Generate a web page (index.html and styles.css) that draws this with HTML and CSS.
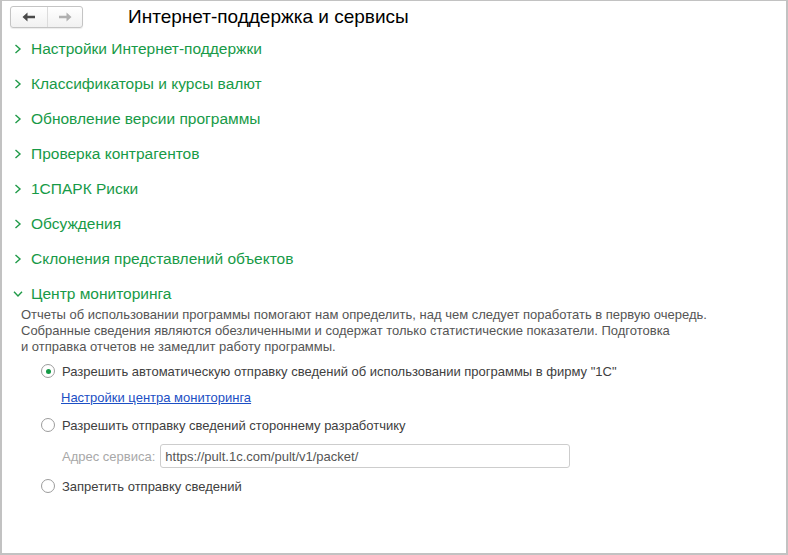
FILE: index.html
```html
<!DOCTYPE html>
<html lang="ru">
<head>
<meta charset="utf-8">
<link rel="stylesheet" href="styles.css">
</head>
<body>
<div class="frame">
  <div class="header">
    <div class="nav">
      <button class="navbtn back" type="button">
        <svg width="14" height="10" viewBox="0 0 14 10"><path d="M0.5 5 L5.5 0.5 L5.5 3.8 L13 3.8 L13 6.2 L5.5 6.2 L5.5 9.5 Z" fill="#4a4a4a"/></svg>
      </button>
      <button class="navbtn fwd" type="button">
        <svg width="14" height="10" viewBox="0 0 14 10"><path d="M13.5 5 L8.5 0.5 L8.5 3.8 L1 3.8 L1 6.2 L8.5 6.2 L8.5 9.5 Z" fill="#b0b0b0"/></svg>
      </button>
    </div>
    <h1 class="title">Интернет-поддержка и сервисы</h1>
  </div>

  <ul class="groups">
    <li class="group"><span class="chev"><svg width="8" height="10" viewBox="0 0 8 10"><path d="M1.5 1 L6 5 L1.5 9" fill="none" stroke="#1f9a48" stroke-width="1.4"/></svg></span>Настройки Интернет-поддержки</li>
    <li class="group"><span class="chev"><svg width="8" height="10" viewBox="0 0 8 10"><path d="M1.5 1 L6 5 L1.5 9" fill="none" stroke="#1f9a48" stroke-width="1.4"/></svg></span>Классификаторы и курсы валют</li>
    <li class="group"><span class="chev"><svg width="8" height="10" viewBox="0 0 8 10"><path d="M1.5 1 L6 5 L1.5 9" fill="none" stroke="#1f9a48" stroke-width="1.4"/></svg></span>Обновление версии программы</li>
    <li class="group"><span class="chev"><svg width="8" height="10" viewBox="0 0 8 10"><path d="M1.5 1 L6 5 L1.5 9" fill="none" stroke="#1f9a48" stroke-width="1.4"/></svg></span>Проверка контрагентов</li>
    <li class="group"><span class="chev"><svg width="8" height="10" viewBox="0 0 8 10"><path d="M1.5 1 L6 5 L1.5 9" fill="none" stroke="#1f9a48" stroke-width="1.4"/></svg></span>1СПАРК Риски</li>
    <li class="group"><span class="chev"><svg width="8" height="10" viewBox="0 0 8 10"><path d="M1.5 1 L6 5 L1.5 9" fill="none" stroke="#1f9a48" stroke-width="1.4"/></svg></span>Обсуждения</li>
    <li class="group"><span class="chev"><svg width="8" height="10" viewBox="0 0 8 10"><path d="M1.5 1 L6 5 L1.5 9" fill="none" stroke="#1f9a48" stroke-width="1.4"/></svg></span>Склонения представлений объектов</li>
    <li class="group open"><span class="chev"><svg width="10" height="8" viewBox="0 0 10 8"><path d="M1 1.8 L5 6 L9 1.8" fill="none" stroke="#1f9a48" stroke-width="1.4"/></svg></span>Центр мониторинга</li>
  </ul>

  <div class="monitor">
    <p class="desc">Отчеты об использовании программы помогают нам определить, над чем следует поработать в первую очередь.<br>Собранные сведения являются обезличенными и содержат только статистические показатели. Подготовка<br>и отправка отчетов не замедлит работу программы.</p>

    <div class="options">
      <div class="radio-row"><span class="radio checked"></span>Разрешить автоматическую отправку сведений об использовании программы в фирму "1С"</div>
      <a class="link" href="#">Настройки центра мониторинга</a>
      <div class="radio-row"><span class="radio"></span>Разрешить отправку сведений стороннему разработчику</div>
      <div class="field-row">
        <span class="field-label">Адрес сервиса:</span>
        <span class="field-input">https://pult.1c.com/pult/v1/packet/</span>
      </div>
      <div class="radio-row last"><span class="radio"></span>Запретить отправку сведений</div>
    </div>
  </div>
</div>
</body>
</html>
```

FILE: styles.css
```css
html, body {
  margin: 0;
  padding: 0;
  background: #ffffff;
}
body {
  font-family: "Liberation Sans", Arial, sans-serif;
  width: 788px;
  height: 555px;
  overflow: hidden;
}
.frame {
  box-sizing: border-box;
  width: 788px;
  height: 555px;
  border: 2px solid #c2c2c2;
  border-top-width: 1px;
  background: #fff;
}
.header {
  display: flex;
  align-items: center;
  padding: 4px 0 0 8px;
  height: 23px;
}
.nav {
  display: flex;
  width: 73px;
  height: 22px;
  box-sizing: border-box;
  border: 1px solid #c4c4c4;
  border-radius: 3px;
  background: linear-gradient(#ffffff, #f1f1f1);
  box-shadow: 0 1px 1px rgba(0,0,0,0.08);
  overflow: hidden;
}
.navbtn {
  flex: 1;
  border: 0;
  margin: 0;
  padding: 0;
  background: transparent;
  display: flex;
  align-items: center;
  justify-content: center;
}
.navbtn.back {
  border-right: 1px solid #dcdcdc;
  padding-left: 1px;
}
.title {
  margin: 1px 0 0 45px;
  font-weight: normal;
  font-size: 19px;
  color: #000;
  line-height: 22px;
}
.groups {
  list-style: none;
  margin: 3px 0 0 0;
  padding: 0;
}
.group {
  display: flex;
  align-items: center;
  height: 35px;
  padding-left: 12px;
  font-size: 15.5px;
  color: #179a47;
}
.chev {
  display: inline-flex;
  width: 17px;
  align-items: center;
}
.group.open .chev {
  margin-left: -1px;
  width: 18px;
}
.group.open {
  height: 31px;
  padding-top: 4px;
  box-sizing: border-box;
}
.monitor {
  padding-left: 19px;
}
.desc {
  margin: 0;
  font-size: 13px;
  line-height: 16px;
  color: #555;
}
.options {
  margin-top: 8px;
  padding-left: 20px;
  display: flex;
  flex-direction: column;
  font-size: 13px;
  color: #404040;
}
.radio-row {
  display: flex;
  align-items: center;
  height: 16px;
}
.radio {
  box-sizing: border-box;
  width: 14px;
  height: 14px;
  border: 1px solid #9c9c9c;
  border-radius: 50%;
  background: #fff;
  margin-right: 7px;
  display: flex;
  align-items: center;
  justify-content: center;
}
.radio.checked::after {
  content: "";
  width: 5px;
  height: 5px;
  border-radius: 50%;
  background: #149a46;
}
.link {
  margin: 11px 0 11px 20px;
  color: #1c4fc4;
  text-decoration: underline;
  line-height: 16px;
  align-self: flex-start;
}
.field-row {
  display: flex;
  align-items: center;
  margin: 11px 0 0 21px;
  height: 24px;
}
.field-label {
  color: #a8a8a8;
  margin-right: 5px;
}
.field-input {
  box-sizing: border-box;
  width: 410px;
  height: 24px;
  border: 1px solid #cdcdcd;
  border-radius: 3px;
  padding: 0 4px;
  display: flex;
  align-items: center;
  color: #555;
}
.radio-row.last {
  margin-top: 10px;
}
```
